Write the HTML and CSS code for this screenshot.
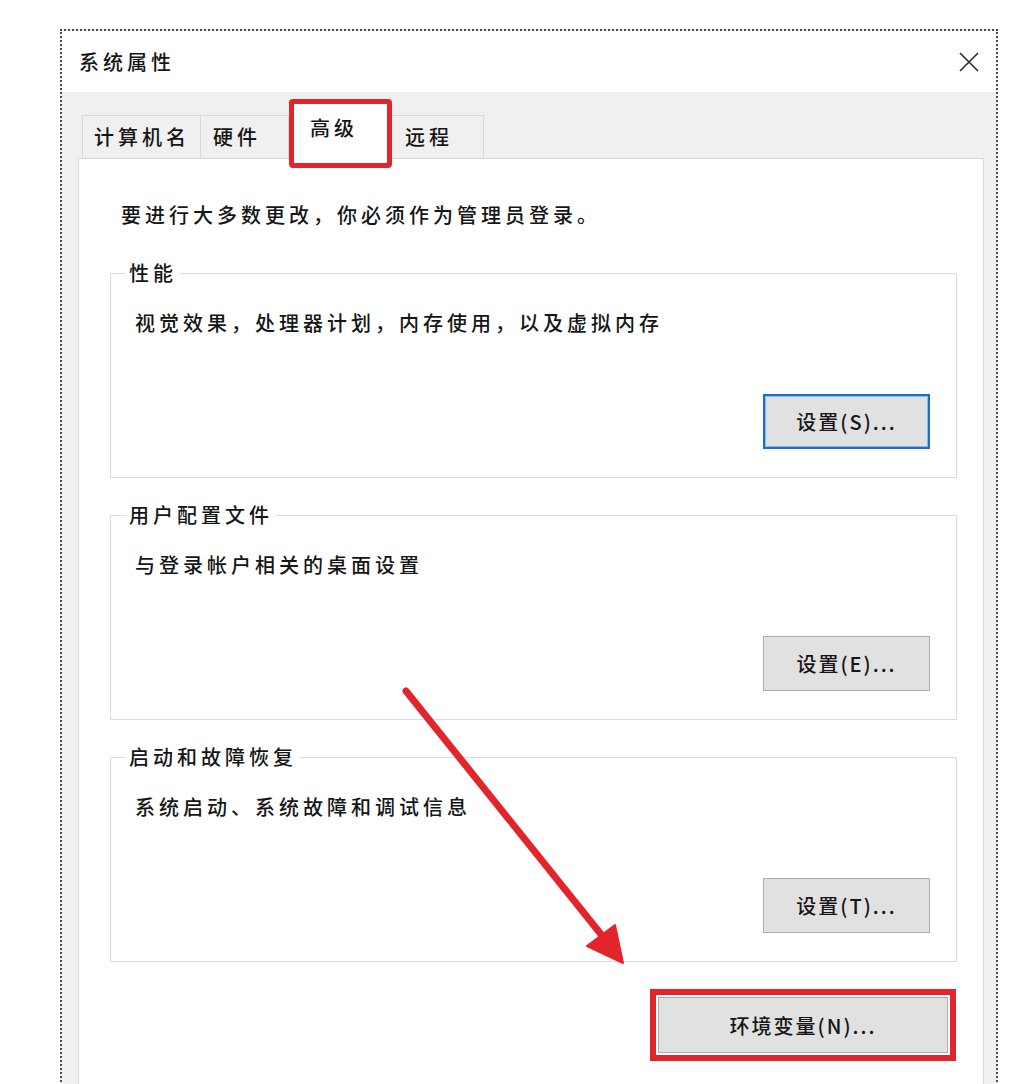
FILE: index.html
```html
<!DOCTYPE html>
<html lang="zh-CN">
<head>
<meta charset="utf-8">
<title>系统属性</title>
<link rel="stylesheet" href="styles.css">
</head>
<body>
<div class="page">
  <div class="dialog">
    <div class="titlebar">
      <span class="title">系统属性</span>
      <svg class="close" width="20" height="20" viewBox="0 0 20 20" aria-label="关闭">
        <path d="M1 1 L19 19 M19 1 L1 19" stroke="#2b2b2b" stroke-width="1.6" fill="none"/>
      </svg>
    </div>
    <div class="body">
      <div class="tabs">
        <div class="tab tab-name">计算机名</div>
        <div class="tab tab-hw">硬件</div>
        <div class="tab tab-active">高级</div>
        <div class="tab tab-remote">远程</div>
      </div>
      <div class="panel">
        <p class="intro">要进行大多数更改，你必须作为管理员登录。</p>

        <fieldset class="group">
          <legend>性能</legend>
          <p class="desc">视觉效果，处理器计划，内存使用，以及虚拟内存</p>
          <div class="actions"><button class="btn btn-focus">设置(S)...</button></div>
        </fieldset>

        <fieldset class="group">
          <legend>用户配置文件</legend>
          <p class="desc">与登录帐户相关的桌面设置</p>
          <div class="actions"><button class="btn">设置(E)...</button></div>
        </fieldset>

        <fieldset class="group">
          <legend>启动和故障恢复</legend>
          <p class="desc">系统启动、系统故障和调试信息</p>
          <div class="actions"><button class="btn">设置(T)...</button></div>
        </fieldset>

        <div class="env-row"><button class="btn btn-env">环境变量(N)...</button></div>
      </div>
    </div>
  </div>

  <svg class="arrow" width="1030" height="1084" viewBox="0 0 1030 1084">
    <line x1="406" y1="691" x2="604" y2="938" stroke="#e3242b" stroke-width="7" stroke-linecap="round"/>
    <polygon points="623,963 587,946 615,925" fill="#e3242b" stroke="#e3242b" stroke-width="2" stroke-linejoin="round"/>
  </svg>
</div>
</body>
</html>
```

FILE: styles.css
```css
* {
  box-sizing: border-box;
}

html, body {
  margin: 0;
  background: #ffffff;
}

body {
  font-family: "Noto Sans CJK SC", "Noto Sans", sans-serif;
  font-size: 20px;
  font-weight: 500;
  letter-spacing: 4px;
  color: #161616;
}

.page {
  position: relative;
  width: 1030px;
  height: 1084px;
  overflow: hidden;
  padding: 29px 0 0 60px;
}

.dialog {
  width: 938px;
  height: 1100px;
  border: 2px dotted #4a4a4a;
  border-bottom: none;
  background: #f0f0f0;
  display: flex;
  flex-direction: column;
}

.titlebar {
  height: 61px;
  background: #ffffff;
  display: flex;
  align-items: center;
  justify-content: space-between;
  padding: 0 17px 0 17px;
}

.title {
  line-height: 30px;
}

.close {
  display: block;
}

.body {
  flex: 1;
  display: flex;
  flex-direction: column;
  padding: 0 12px 0 16px;
}

.tabs {
  height: 66px;
  display: flex;
  align-items: flex-end;
  padding-left: 4px;
}

.tab {
  height: 43px;
  border: 1px solid #d9d9d9;
  border-bottom: none;
  background: #f0f0f0;
  display: flex;
  align-items: center;
  padding-left: 11px;
  line-height: 1;
  white-space: nowrap;
}

.tab-name {
  width: 119px;
  margin-right: -1px;
}

.tab-hw {
  width: 89px;
  padding-left: 12px;
}

.tab-active {
  position: relative;
  z-index: 2;
  width: 102px;
  height: 59px;
  margin-bottom: -1px;
  background: #ffffff;
  padding-left: 20px;
  padding-bottom: 4px;
}

.tab-active::after {
  content: "";
  position: absolute;
  left: -1px;
  right: -2px;
  top: -2px;
  bottom: -9px;
  border: 5px solid #e0262c;
  border-radius: 4px;
}

.tab-remote {
  width: 93px;
  padding-left: 13px;
}

.panel {
  flex: 1;
  background: #ffffff;
  border: 1px solid #d9d9d9;
  padding: 41px 26px 0 31px;
}

.intro {
  margin: 0 0 29px;
  padding-left: 11px;
  line-height: 30px;
}

.group {
  margin: 0 0 23px;
  min-width: 0;
  border: 1px solid #dcdcdc;
  padding: 21px 26px 28px 24px;
}

.group legend {
  padding: 0 3px;
  margin-left: -9px;
  line-height: 28px;
}

.desc {
  margin: 0;
  line-height: 30px;
}

.actions {
  display: flex;
  justify-content: flex-end;
  margin-top: 56px;
}

.btn {
  font: inherit;
  letter-spacing: 2px;
  color: inherit;
  width: 167px;
  height: 55px;
  padding: 0;
  background: #e1e1e1;
  border: 1px solid #adadad;
  border-radius: 0;
}

.btn-focus {
  border: 2px solid #1c6fc4;
  box-shadow: inset 0 0 0 1px #86bcec;
}

.env-row {
  display: flex;
  justify-content: flex-end;
  margin-top: 35px;
  padding-right: 9px;
}

.btn-env {
  width: 290px;
  height: 56px;
  outline: 6px solid #e0262c;
  outline-offset: 2px;
  border-radius: 0;
}

.arrow {
  position: absolute;
  left: 0;
  top: 0;
  pointer-events: none;
}
```
